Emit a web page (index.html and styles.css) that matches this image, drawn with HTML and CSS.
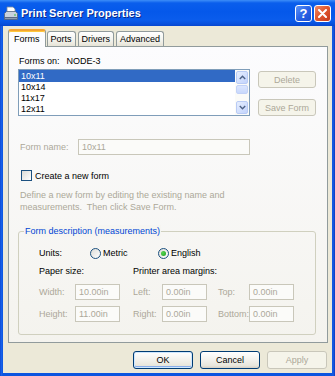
FILE: index.html
```html
<!DOCTYPE html>
<html lang="en">
<head>
    <meta charset="UTF-8">
    <title>Print Server Properties</title>
    <link rel="stylesheet" href="styles.css">
</head>
<body>
    <div class="window">
        <div class="titlebar">
            <svg class="app-icon" width="15" height="15" viewBox="0 0 15 15">
                <path d="M4 1h6l2 2v4H4z" fill="#fff" stroke="#7a8aa0" stroke-width="0.8"/>
                <path d="M1.5 7.5l2-2h9l2 2v4h-13z" fill="#c9d2de" stroke="#55657c" stroke-width="0.8"/>
                <path d="M1.5 11.5h13v2h-13z" fill="#8d9bb0" stroke="#55657c" stroke-width="0.8"/>
                <rect x="11" y="8.5" width="2" height="1" fill="#3fbf3f"/>
            </svg>
            <span class="title">Print Server Properties</span>
            <div class="caption-btns">
                <span class="cap-btn help">?</span>
                <span class="cap-btn close">
                    <svg width="9" height="9" viewBox="0 0 9 9">
                        <path d="M1 1L8 8M8 1L1 8" stroke="#fff" stroke-width="2" stroke-linecap="round"/>
                    </svg>
                </span>
            </div>
        </div>

        <div class="client">
            <div class="tabs">
                <span class="tab active">Forms</span>
                <span class="tab">Ports</span>
                <span class="tab">Drivers</span>
                <span class="tab">Advanced</span>
            </div>

            <div class="panel">
                <div class="forms-on">
                    <span>Forms on:</span>
                    <span class="node">NODE-3</span>
                </div>

                <div class="list-row">
                    <div class="listbox">
                        <ul class="items">
                            <li class="selected">10x11</li>
                            <li>10x14</li>
                            <li>11x17</li>
                            <li>12x11</li>
                        </ul>
                        <div class="vscroll">
                            <span class="sb-btn">
                                <svg width="7" height="5" viewBox="0 0 7 5"><path d="M0.8 4L3.5 1.3L6.2 4" fill="none" stroke="#4d6185" stroke-width="1.4"/></svg>
                            </span>
                            <span class="sb-thumb"></span>
                            <span class="sb-track"></span>
                            <span class="sb-btn">
                                <svg width="7" height="5" viewBox="0 0 7 5"><path d="M0.8 1L3.5 3.7L6.2 1" fill="none" stroke="#4d6185" stroke-width="1.4"/></svg>
                            </span>
                        </div>
                    </div>
                    <div class="side-btns">
                        <button class="btn" disabled>Delete</button>
                        <button class="btn" disabled>Save Form</button>
                    </div>
                </div>

                <div class="name-row">
                    <span class="muted name-label">Form name:</span>
                    <span class="field name-field">10x11</span>
                </div>

                <div class="check-row">
                    <span class="checkbox"></span>
                    <span>Create a new form</span>
                </div>

                <p class="hint">Define a new form by editing the existing name and<br>measurements.&nbsp; Then click Save Form.</p>

                <div class="group">
                    <span class="legend">Form description (measurements)</span>

                    <div class="units-row">
                        <span class="units-label">Units:</span>
                        <span class="radio"></span>
                        <span class="metric">Metric</span>
                        <span class="radio checked"></span>
                        <span>English</span>
                    </div>

                    <div class="measure">
                        <span class="heading span2">Paper size:</span>
                        <span class="heading span4">Printer area margins:</span>

                        <span class="muted">Width:</span>
                        <span class="field small">10.00in</span>
                        <span class="muted">Left:</span>
                        <span class="field small">0.00in</span>
                        <span class="muted">Top:</span>
                        <span class="field small">0.00in</span>

                        <span class="muted">Height:</span>
                        <span class="field small">11.00in</span>
                        <span class="muted">Right:</span>
                        <span class="field small">0.00in</span>
                        <span class="muted">Bottom:</span>
                        <span class="field small">0.00in</span>
                    </div>
                </div>
            </div>

            <div class="actions">
                <button class="btn active default">OK</button>
                <button class="btn active">Cancel</button>
                <button class="btn" disabled>Apply</button>
            </div>
        </div>
    </div>
</body>
</html>
```

FILE: styles.css
```css
* {
    margin: 0;
    padding: 0;
    box-sizing: border-box;
}

body {
    font-family: "Liberation Sans", Arial, sans-serif;
    font-size: 9px;
    color: #000;
    background: #fff;
}

.window {
    width: 335px;
    height: 376px;
    display: flex;
    flex-direction: column;
    background: linear-gradient(to right, #0a3fc9 0, #1a64ec 1px, #0b55e0 3px, #0b55e0 332px, #1a5ee6 333px, #0a3bc0 335px);
}

/* title bar */
.titlebar {
    height: 26px;
    display: flex;
    align-items: center;
    padding: 0 4px 0 3px;
    background: linear-gradient(to bottom, #3d8ef8 0, #0a5eec 3px, #0558ea 12px, #0a5cec 20px, #0850dc 24px, #0746cf 26px);
}

.app-icon {
    margin-top: 1px;
}

.title {
    flex: 1;
    margin-left: 3px;
    font-size: 11px;
    font-weight: bold;
    color: #fff;
    text-shadow: 1px 1px 0 #0a2a8c;
}

.caption-btns {
    display: flex;
    gap: 2px;
    margin-top: 1px;
}

.cap-btn {
    width: 17px;
    height: 17px;
    border: 1px solid #fff;
    border-radius: 3px;
    display: flex;
    align-items: center;
    justify-content: center;
}

.help {
    background: linear-gradient(135deg, #5f95f8 0%, #2a63e6 50%, #1a4fd3 100%);
    color: #fff;
    font-size: 13px;
    font-weight: bold;
}

.close {
    background: linear-gradient(135deg, #ee8a6a 0%, #e25a30 45%, #c5391b 100%);
}

/* client area */
.client {
    flex: 1;
    margin: 0 3px 3px;
    background: #ece9d8;
    display: flex;
    flex-direction: column;
}

.tabs {
    display: flex;
    align-items: flex-end;
    height: 20px;
    padding-left: 5px;
}

.tab {
    height: 15px;
    line-height: 14px;
    padding: 0 3px;
    margin-left: 2px;
    border: 1px solid #919b9c;
    border-bottom: none;
    border-radius: 3px 3px 0 0;
    background: linear-gradient(to bottom, #fff, #f3f2ec 60%, #e6e3d6);
}

.tab.active {
    height: 18px;
    margin-left: 0;
    margin-right: -1px;
    margin-bottom: -1px;
    padding: 0 5px;
    line-height: 17px;
    position: relative;
    background: #fcfcfe;
    border-top: 2px solid #f3a533;
    box-shadow: inset 0 1px 0 #ffc83c;
}

.panel {
    margin-left: 5px;
    width: 320px;
    height: 297px;
    border: 1px solid #919b9c;
    background: linear-gradient(to bottom, #fcfcfe, #f4f3ee);
    padding: 8px 0 0 10px;
}

.forms-on {
    display: flex;
    height: 12px;
    line-height: 12px;
}

.node {
    margin-left: 7px;
}

.list-row {
    display: flex;
    margin-top: 2px;
    margin-left: -1px;
}

.listbox {
    width: 232px;
    height: 47px;
    border: 1px solid #7f9db9;
    background: #fff;
    display: flex;
}

.items {
    list-style: none;
    flex: 1;
}

.items li {
    height: 11px;
    line-height: 11px;
    padding-left: 2px;
}

.items li.selected {
    height: 12px;
    line-height: 12px;
    background: #316ac5;
    color: #fff;
}

.vscroll {
    width: 14px;
    display: flex;
    flex-direction: column;
    background: #fbfbf8;
    padding: 1px 0;
}

.sb-btn {
    height: 13px;
    margin: 0 1px;
    border: 1px solid #b9cbf5;
    border-radius: 2px;
    background: linear-gradient(135deg, #e6eefe, #c2d3fc);
    display: flex;
    align-items: center;
    justify-content: center;
}

.sb-thumb {
    height: 9px;
    margin: 1px 1px 0;
    border: 1px solid #c3d2f7;
    border-radius: 2px;
    background: linear-gradient(to bottom, #dce6fe, #c8d8fc);
}

.sb-track {
    flex: 1;
}

.side-btns {
    display: flex;
    flex-direction: column;
    gap: 11px;
    margin: 2px 0 0 8px;
}

.btn {
    font-family: inherit;
    font-size: 9px;
    width: 58px;
    height: 17px;
    border: 1px solid #c9c7ba;
    border-radius: 3px;
    background: #f5f4ea;
    color: #aca899;
}

.btn.active {
    width: 60px;
    height: 18px;
    color: #000;
    border-color: #003c74;
    background: linear-gradient(to bottom, #fff 0%, #f5f4f0 40%, #e8e6dc 85%, #d6d0c5 100%);
}

.btn.default {
    box-shadow: inset 0 0 0 1px #cee7ff, inset 0 -1px 0 1px #89adea;
}

.muted {
    color: #aca899;
}

.field {
    height: 16px;
    line-height: 14px;
    border: 1px solid #c9c7ba;
    padding-left: 3px;
    color: #aca899;
    background: #fbfbf9;
}

.name-row {
    display: flex;
    align-items: center;
    margin-top: 23px;
}

.name-label {
    width: 59px;
    padding-left: 1px;
}

.name-field {
    width: 172px;
}

.check-row {
    display: flex;
    align-items: center;
    margin-top: 15px;
    gap: 3px;
    height: 11px;
}

.checkbox {
    width: 11px;
    height: 11px;
    margin-left: 2px;
    border: 1px solid #1c5180;
    background: linear-gradient(135deg, #dcdcd7, #fff);
}

.hint {
    margin-top: 9px;
    padding-left: 1px;
    line-height: 11.5px;
    color: #aca899;
}

.group {
    position: relative;
    width: 298px;
    margin: 18px 0 0 -1px;
    border: 1px solid #d0d0bf;
    border-radius: 3px;
    padding: 15px 0 12px 20px;
}

.legend {
    position: absolute;
    top: -7px;
    left: 5px;
    padding: 0 1px;
    line-height: 12px;
    color: #0046d5;
    background: #f6f5f1;
}

.units-row {
    display: flex;
    align-items: center;
    height: 12px;
}

.units-label {
    width: 51px;
}

.radio {
    width: 11px;
    height: 11px;
    border: 1px solid #1c5180;
    border-radius: 50%;
    background: linear-gradient(135deg, #dcdcd7, #fff);
    margin-right: 2px;
    display: flex;
    align-items: center;
    justify-content: center;
}

.radio.checked::after {
    content: "";
    width: 5px;
    height: 5px;
    border-radius: 50%;
    background: radial-gradient(circle at 35% 35%, #55d451, #21a121);
}

.metric {
    width: 55px;
}

.measure {
    display: grid;
    grid-template-columns: 36px 58px 29px 56px 31px 45px;
    grid-template-rows: 12px 16px 16px;
    row-gap: 6px;
    align-items: center;
    margin-top: 7px;
}

.measure .heading {
    align-self: start;
}

.span2 {
    grid-column: span 2;
}

.span4 {
    grid-column: span 4;
}

.field.small {
    width: 45px;
}

.actions {
    display: flex;
    justify-content: flex-end;
    gap: 7px;
    margin-top: 8px;
    padding-right: 5px;
}

.actions .btn {
    width: 60px;
    height: 18px;
}
```
